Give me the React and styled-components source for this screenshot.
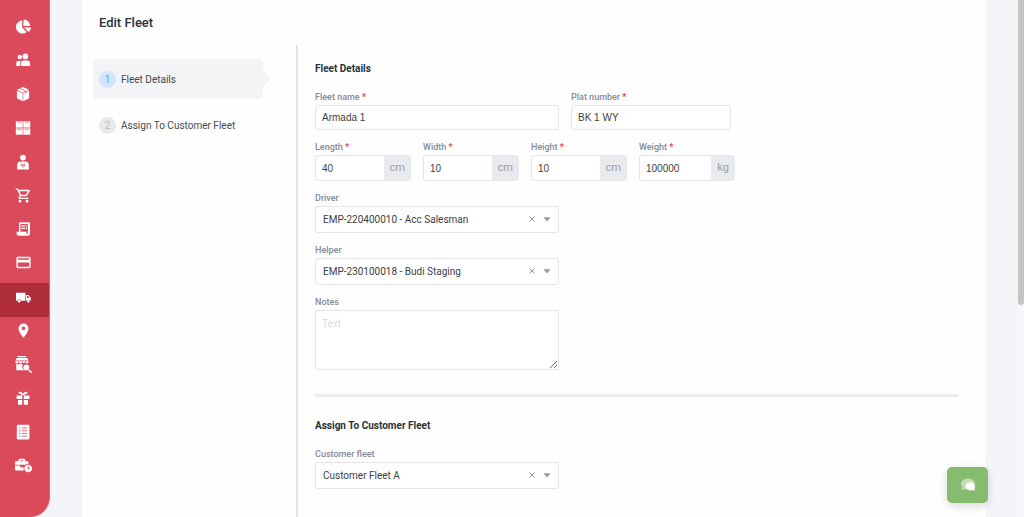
import React from "react";
import styled, { createGlobalStyle, css } from "styled-components";
import { FaChartPie, FaBusinessTime } from "react-icons/fa";
import { MdOutlineShoppingCart, MdOutlineCreditCard, MdLocationOn } from "react-icons/md";

const GlobalStyle = createGlobalStyle`
  * { box-sizing: border-box; }
  body {
    margin: 0;
    background: #f3f5f8;
    color: #464e5f;
    font-family: Roboto, "Liberation Sans", sans-serif;
    font-size: 10px;
    overflow: hidden;
  }
`;

const Page = styled.div`
  display: flex;
  min-height: 100vh;
`;

const Sidebar = styled.nav`
  display: flex;
  flex-direction: column;
  flex: none;
  width: 50px;
  height: 100vh;
  padding: 13px 0 31px;
  background: #da4a5b;
  border-right: 1px solid #e2606f;
  border-radius: 0 0 20px 0;
`;

const NavLink = styled.a`
  display: flex;
  flex: 1;
  align-items: center;
  justify-content: center;
  padding: 0 3px 7px 0;
  color: #fff;
  background: ${(p) => (p.$active ? "#af2c3a" : "transparent")};
`;

const Card = styled.main`
  display: flex;
  flex-direction: column;
  flex: 1;
  min-width: 0;
  margin: 0 38px 0 32px;
  background: #fefefe;
`;

const Title = styled.h1`
  margin: 0;
  padding: 15px 17px 14px;
  font-size: 13px;
  line-height: 16px;
  font-weight: 500;
  color: #263238;
`;

const Columns = styled.div`
  display: flex;
  flex: 1;
`;

const Steps = styled.ol`
  flex: none;
  width: 214px;
  margin: 0;
  padding: 14px 33px 0 11px;
  list-style: none;
`;

const Step = styled.li`
  position: relative;
  border-radius: 4px;
  margin-bottom: 6px;

  ${(p) =>
    p.$active &&
    css`
      background: #f3f4f6;
      &::after {
        content: "";
        position: absolute;
        left: 100%;
        top: 50%;
        margin-top: -8px;
        border: 8px solid transparent;
        border-left-color: #f3f4f6;
        border-right-width: 0;
      }
    `}
`;

const StepLink = styled.a`
  display: flex;
  align-items: center;
  gap: 5px;
  height: 40px;
  padding-left: 6px;
  color: #3f4b50;
  text-decoration: none;
`;

const StepNumber = styled.span`
  width: 17px;
  height: 17px;
  border-radius: 50%;
  line-height: 17px;
  text-align: center;
  color: ${(p) => (p.$active ? "#5b9df5" : "#b4b7c0")};
  background: ${(p) => (p.$active ? "#d3e5fd" : "#e8e9ed")};
`;

const Form = styled.form`
  flex: 1;
  min-width: 0;
  padding: 16px 28px 27px 17px;
  border-left: 2px solid #e4e4e7;
`;

const Heading = styled.h2`
  margin: 0 0 14px;
  font-size: 10px;
  line-height: 16px;
  font-weight: 700;
  color: #263238;
`;

const Row = styled.div`
  display: flex;
  gap: 12px;
  margin-bottom: 11px;
`;

const Field = styled.div`
  width: ${(p) => p.$width}px;
`;

const Label = styled.label`
  display: block;
  height: 14px;
  line-height: 12px;
  font-size: 9px;
  font-weight: ${(p) => (p.$strong ? 500 : 400)};
  color: #848b99;
`;

const Required = styled.span`
  font-weight: 700;
  color: #e5404f;
`;

const control = css`
  display: block;
  width: 100%;
  border: 1px solid #e4e4e9;
  border-radius: 3px;
  background: #fff;
  color: #3c4043;
  outline: none;
`;

const Input = styled.input`
  ${control}
  height: 25px;
  padding: 0 6px;
  font: 10px "Liberation Sans", Arial, sans-serif;
`;

const UnitGroup = styled.div`
  display: flex;
  height: 26px;

  ${Input} {
    flex: 1;
    min-width: 0;
    height: 26px;
    border-right: 0;
    border-radius: 3px 0 0 3px;
  }
`;

const Unit = styled.span`
  padding: 0 6px;
  font-size: 11px;
  line-height: 26px;
  border-radius: 0 3px 3px 0;
  background: #e9eaee;
  color: #9a9ea8;
`;

const SelectBox = styled.div`
  position: relative;
`;

const Select = styled.select`
  ${control}
  appearance: none;
  height: 27px;
  padding: 0 40px 0 7px;
  font: 10px Roboto, sans-serif;
`;

const ClearButton = styled.button`
  position: absolute;
  top: 8px;
  right: 22px;
  display: flex;
  padding: 2px;
  border: 0;
  background: none;
  color: #999;
`;

const Caret = styled.svg`
  position: absolute;
  top: 11px;
  right: 8px;
  pointer-events: none;
`;

const TextArea = styled.textarea`
  ${control}
  height: 60px;
  padding: 7px 6px;
  font: 10px Roboto, sans-serif;
  resize: vertical;

  &::placeholder {
    color: #dcdce0;
  }
`;

const Divider = styled.hr`
  height: 3px;
  margin: 24px 0 21px;
  border: 0;
  background: #ebebf0;
`;

const ChatButton = styled.button`
  position: fixed;
  right: 36px;
  bottom: 14px;
  display: flex;
  align-items: center;
  justify-content: center;
  width: 41px;
  height: 36px;
  padding: 0;
  border: 0;
  border-radius: 5px;
  background: #86bc6d;
  box-shadow: 0 3px 10px rgba(0, 0, 0, 0.15);
`;

const ScrollTrack = styled.div`
  position: fixed;
  top: 0;
  right: 0;
  width: 6px;
  height: 100vh;
  background: #f7f7f9;
`;

const ScrollThumb = styled.div`
  height: 59%;
  border-radius: 0 0 3px 3px;
  background: #c4c4c4;
`;

const Glyph = ({ children }) => (
  <svg width="18" height="18" viewBox="0 0 18 18" fill="currentColor" aria-hidden="true">
    {children}
  </svg>
);

const PeopleIcon = () => (
  <Glyph>
    <circle cx="5.8" cy="6" r="2.2" />
    <circle cx="11.4" cy="5.4" r="2.8" />
    <path d="M2.2 15v-2.8Q2.2 10 4.4 10h2.7Q6 11 6 12.5V15z" />
    <path d="M6.8 15v-2.7Q6.8 9.4 9.7 9.4h3.3q3.1 0 3.1 2.9V15z" />
  </Glyph>
);

const BoxIcon = () => (
  <Glyph>
    <path d="M9 1.9 15 4.8 9 7.7 3 4.8z" />
    <path d="M2.9 5.5 8.7 8.3V16.3L2.9 13.3zM15.100 5.500 9.300 8.300V16.300l5.800-3z" />
    <path d="M5.800 3.300 11.900 6.300V8.500" fill="none" stroke="#da4a5b" strokeWidth=".7" />
  </Glyph>
);

const BoxesIcon = () => (
  <Glyph>
    {[[1.8, 2.2], [9.3, 2.2], [1.8, 9.3], [9.3, 9.3]].map(([x, y]) => (
      <g key={`${x}-${y}`} transform={`translate(${x} ${y})`}>
        <path d="M0 0h6.900v6.400H0z" />
        <path d="M2.300 0v1.700l1.200-.5 1.200.5V0" fill="none" stroke="#da4a5b" strokeWidth=".5" />
      </g>
    ))}
  </Glyph>
);

const SalesmanIcon = () => (
  <Glyph>
    <circle cx="9" cy="4.6" r="2.9" />
    <path d="M3.200 16.500v-4.200q0-3.700 3.700-3.700h4.200q3.700 0 3.700 3.700v4.200z" />
    <path d="m7.300 10.800 1.700 1.200 1.700-1.200v2.400L9 12l-1.700 1.200zM9 12.500v2.500" fill="none" stroke="#da4a5b" strokeWidth=".6" />
  </Glyph>
);

const ReceiptIcon = () => (
  <Glyph>
    <path
      fillRule="evenodd"
      d="M5 2l1 .8 1-.8 1 .8 1-.8 1 .8 1-.8 1 .8 1-.8 1 .8 1-.8 1 .8V13.500q0 2.300-2.300 2.300H5.200q-2.600 0-2.600-2.500v-1.500H5zM6.400 4v7.800h6.100v1.700q0 .8.700.8t.7-.8V4z"
    />
    <path d="M7.300 5.200h3.700v1.300H7.300zM11.800 5.200h1.300v1.300h-1.300zM7.300 7.700h3.700V9H7.300zM11.800 7.700h1.300V9h-1.300z" />
  </Glyph>
);

const TruckIcon = () => (
  <Glyph>
    <path d="M2 4.800h9.400v8H7.300a2.200 2.200 0 0 0-4.200 0H2z" />
    <path fillRule="evenodd" d="M12 7h2.500l2.200 2.800v3h-.6a2 2 0 0 0-3.600 0H12zM13 8v1.800h2.500L14.200 8z" />
    <circle cx="5.200" cy="13.200" r="1.400" />
    <circle cx="14.300" cy="13.200" r="1.300" />
  </Glyph>
);

const StoreSearchIcon = () => (
  <Glyph>
    <path d="M3.500 1h8.700v1.300H3.500zM2.600 3h10.600l1.200 2.600H1.400z" />
    <path d="M1.400 6.200h3V7a1.500 1.500 0 0 1-3 0zM4.900 6.200h3V7a1.500 1.500 0 0 1-3 0zM8.400 6.200h2.900V7a1.500 1.500 0 0 1-2.900 0zM11.800 6.200h2.700V7a1.350 1.400 0 0 1-2.700 0z" />
    <path d="M2.200 9.300h6.800a4 4 0 0 0 1.300 6H2.200z" />
    <circle cx="12.300" cy="12.400" r="2.900" />
    <path d="m14.600 14.700 3.100 3" stroke="currentColor" strokeWidth="1.300" />
  </Glyph>
);

const GiftIcon = () => (
  <Glyph>
    <path d="M2.600 6.600h5.600v3.300H2.600zM9.800 6.600h5.600v3.300H9.800zM4 10.900h4.200v4.800H4zM9.800 10.900H14v4.800H9.800z" />
    <path d="M8.600 6.200Q7.900 3.500 4.600 3.700M9.400 6.200q.7-2.700 4-2.500" fill="none" stroke="currentColor" strokeWidth="1.800" />
  </Glyph>
);

const ListIcon = () => (
  <Glyph>
    <rect x="2.800" y="1.700" width="12.600" height="14.700" rx="1.200" />
    <path
      d="M4.800 5h1.700M4.800 7.700h1.700M4.800 10.400h1.700M4.800 13.100h1.700M8 5h5.300M8 7.700h5.300M8 10.400h5.300M8 13.100h5.300"
      stroke="#da4a5b"
      strokeWidth=".8"
    />
  </Glyph>
);

const NAV = [
  ["Dashboard", <FaChartPie size={15} />],
  ["Customers", <PeopleIcon />],
  ["Products", <BoxIcon />],
  ["Inventory", <BoxesIcon />],
  ["Salesmen", <SalesmanIcon />],
  ["Orders", <MdOutlineShoppingCart size={17} />],
  ["Invoices", <ReceiptIcon />],
  ["Payments", <MdOutlineCreditCard size={17} />],
  ["Fleet", <TruckIcon />],
  ["Locations", <MdLocationOn size={17} />],
  ["Store search", <StoreSearchIcon />],
  ["Promotions", <GiftIcon />],
  ["Reports", <ListIcon />],
  ["Work schedule", <FaBusinessTime size={17} />],
];

const FieldLabel = ({ id, required, children }) => (
  <Label htmlFor={id} $strong>
    {children}
    {required && <Required> *</Required>}
  </Label>
);

const TextField = ({ id, label, value, width, unit }) => (
  <Field $width={width}>
    <FieldLabel id={id} required>{label}</FieldLabel>
    {unit ? (
      <UnitGroup>
        <Input id={id} defaultValue={value} />
        <Unit>{unit}</Unit>
      </UnitGroup>
    ) : (
      <Input id={id} defaultValue={value} />
    )}
  </Field>
);

const SelectField = ({ id, label, value }) => (
  <Row>
    <Field $width={244}>
      <FieldLabel id={id}>{label}</FieldLabel>
      <SelectBox>
        <Select id={id} defaultValue={value}>
          <option>{value}</option>
        </Select>
        <ClearButton type="button" aria-label={`Clear ${label}`}>
          <svg width="6" height="6" viewBox="0 0 6 6" stroke="currentColor" strokeWidth="1">
            <path d="m.5.5 5 5m0-5-5 5" />
          </svg>
        </ClearButton>
        <Caret width="8" height="5" viewBox="0 0 8 5" fill="#999">
          <path d="M.5.300h7L4 4.500z" />
        </Caret>
      </SelectBox>
    </Field>
  </Row>
);

export default function App() {
  return (
    <>
      <GlobalStyle />
      <Page>
        <Sidebar aria-label="Main">
          {NAV.map(([name, icon]) => (
            <NavLink key={name} href="#" aria-label={name} $active={name === "Fleet"}>
              {icon}
            </NavLink>
          ))}
        </Sidebar>
        <Card>
          <Title>Edit Fleet</Title>
          <Columns>
            <Steps>
              <Step $active>
                <StepLink href="#details">
                  <StepNumber $active>1</StepNumber>Fleet Details
                </StepLink>
              </Step>
              <Step>
                <StepLink href="#assign">
                  <StepNumber>2</StepNumber>Assign To Customer Fleet
                </StepLink>
              </Step>
            </Steps>
            <Form>
              <Heading id="details">Fleet Details</Heading>
              <Row>
                <TextField id="name" label="Fleet name" value="Armada 1" width={244} />
                <TextField id="plat" label="Plat number" value="BK 1 WY" width={160} />
              </Row>
              <Row>
                <TextField id="length" label="Length" value="40" unit="cm" width={96} />
                <TextField id="width" label="Width" value="10" unit="cm" width={96} />
                <TextField id="height" label="Height" value="10" unit="cm" width={96} />
                <TextField id="weight" label="Weight" value="100000" unit="kg" width={96} />
              </Row>
              <SelectField id="driver" label="Driver" value="EMP-220400010 - Acc Salesman" />
              <SelectField id="helper" label="Helper" value="EMP-230100018 - Budi Staging" />
              <Field $width={244}>
                <FieldLabel id="notes">Notes</FieldLabel>
                <TextArea id="notes" placeholder="Text" />
              </Field>
              <Divider />
              <Heading id="assign">Assign To Customer Fleet</Heading>
              <SelectField id="customer" label="Customer fleet" value="Customer Fleet A" />
            </Form>
          </Columns>
        </Card>
      </Page>
      <ScrollTrack>
        <ScrollThumb />
      </ScrollTrack>
      <ChatButton type="button" aria-label="Open chat">
        <svg width="16" height="14" viewBox="0 0 16 14">
          <path d="M8 .5c4 0 7 2.400 7 5.500s-3 5.500-7 5.500q-1.500 0-2.700-.4L1.500 12.300l.9-2.700Q1 8 1 6C1 2.900 4 .5 8 .5z" fill="#c3deb6" />
          <path d="M10.300 4.300c2.700 0 4.700 1.700 4.700 4q0 1.300-.6 2.200l.6 2.300-2.500-.8q-1 .4-2.200.4c-2.700 0-4.800-1.700-4.800-4.100s2.100-4 4.800-4z" fill="#fff" />
        </svg>
      </ChatButton>
    </>
  );
}
